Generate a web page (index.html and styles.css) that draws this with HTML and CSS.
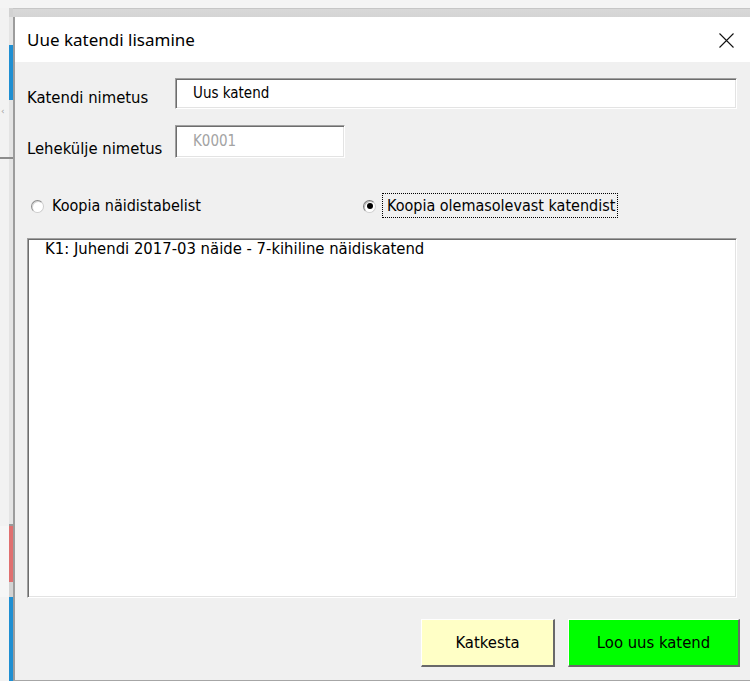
FILE: index.html
```html
<!DOCTYPE html>
<html lang="et">
<head>
<meta charset="utf-8">
<title>Uue katendi lisamine</title>
<link rel="stylesheet" href="styles.css">
</head>
<body>
<div class="screen">
  <div class="top-gap"></div>
  <div class="main">
    <div class="sheet-side">
      <div class="seg seg-band"></div>
      <div class="seg seg-light seg-a"></div>
      <div class="seg seg-blue seg-b"></div>
      <div class="seg seg-light seg-c"><span class="mark">‹</span></div>
      <div class="seg seg-line"></div>
      <div class="seg seg-light seg-d"></div>
      <div class="seg seg-line2"></div>
      <div class="seg seg-red seg-e"></div>
      <div class="seg seg-grey seg-f"></div>
      <div class="seg seg-blue seg-g"></div>
    </div>
    <div class="frame">
      <div class="ribbon-edge"></div>
      <section class="dialog">
        <header class="titlebar">
          <h1 class="title">Uue katendi lisamine</h1>
          <svg class="close" width="15" height="15" viewBox="0 0 15 15" aria-label="Sulge">
            <path d="M0.5 0.5 L14.5 14.5 M14.5 0.5 L0.5 14.5" stroke="#111" stroke-width="1.1" fill="none"/>
          </svg>
        </header>
        <div class="body">
          <div class="form-row">
            <label class="field-label label-name">Katendi nimetus</label>
            <div class="sunken input input-name">Uus katend</div>
          </div>
          <div class="form-row row-page">
            <label class="field-label label-page">Lehekülje nimetus</label>
            <div class="sunken input input-page">K0001</div>
          </div>
          <div class="radio-row">
            <div class="radio-opt opt-template">
              <span class="radio"></span>
              <span class="radio-text">Koopia näidistabelist</span>
            </div>
            <div class="radio-opt opt-existing">
              <span class="radio checked"></span>
              <span class="radio-text focused">Koopia olemasolevast katendist</span>
            </div>
          </div>
          <div class="sunken listbox">
            <div class="list-item">K1: Juhendi 2017-03 näide - 7-kihiline näidiskatend</div>
          </div>
          <div class="button-row">
            <button class="btn btn-cancel">Katkesta</button>
            <button class="btn btn-create">Loo uus katend</button>
          </div>
        </div>
      </section>
    </div>
  </div>
</div>
</body>
</html>
```

FILE: styles.css
```css
* {
  box-sizing: border-box;
}

html, body {
  margin: 0;
  padding: 0;
}

body {
  width: 750px;
  height: 681px;
  overflow: hidden;
  background: #f3f3f3;
  font-family: "DejaVu Sans Condensed", "DejaVu Sans", sans-serif;
  font-size: 16.5px;
  color: #000;
}

.screen {
  display: flex;
  flex-direction: column;
  height: 681px;
}

.top-gap {
  height: 8px;
  background: #f4f4f4;
}

.main {
  flex: 1;
  display: flex;
}

/* worksheet edge peeking out on the left */
.sheet-side {
  width: 13px;
  display: flex;
  flex-direction: column;
}

.seg {
  flex: none;
  position: relative;
}

.seg-band {
  height: 9px;
  background: linear-gradient(to right, #f2f2f2 9px, #d2d2d2 9px);
}

.seg-light {
  background: linear-gradient(to right, #f2f2f2 9px, #e4e4e4 9px);
}

.seg-blue {
  background: linear-gradient(to right, #f2f2f2 9px, #1f8fd2 9px);
}

.seg-red {
  background: linear-gradient(to right, #f6f6f6 9px, #e07070 9px);
}

.seg-grey {
  background: linear-gradient(to right, #f6f6f6 9px, #d3d3d3 9px);
}

.seg-a { height: 28px; }
.seg-b { height: 55px; }
.seg-c { height: 57px; }
.seg-d { height: 365px; }
.seg-e { height: 56px; }
.seg-f { height: 15px; }
.seg-g { flex: 1; }

.seg-line {
  height: 2px;
  background: #8c8c8c;
}

.seg-line2 {
  height: 2px;
  background: linear-gradient(to right, #f2f2f2 9px, #9a9a9a 9px);
}

.mark {
  position: absolute;
  left: 1px;
  top: 6px;
  font-family: "DejaVu Sans", sans-serif;
  font-size: 9px;
  color: #a0a0a0;
  line-height: 10px;
}

.frame {
  flex: 1;
  display: flex;
  flex-direction: column;
}

.ribbon-edge {
  height: 9px;
  background: linear-gradient(to bottom, #c6c6c6 0, #c6c6c6 1px, #d8d8d8 1px, #d4d4d4 100%);
}

/* dialog window */
.dialog {
  flex: 1;
  display: flex;
  flex-direction: column;
  border-left: 2px solid #9c9c9c;
  border-bottom: 1px solid #a6a6a6;
  background: #f0f0f0;
}

.titlebar {
  height: 45px;
  flex: none;
  background: #fff;
  display: flex;
  align-items: center;
  justify-content: space-between;
  padding: 0 16px 0 12px;
}

.title {
  margin: 0;
  font-family: "Noto Sans", "Open Sans", sans-serif;
  font-weight: 400;
  font-size: 17px;
  color: #000;
}

.close {
  display: block;
  margin-top: 1px;
}

.body {
  flex: 1;
  display: flex;
  flex-direction: column;
  padding: 16px 13px 0 12px;
}

.form-row {
  display: flex;
  align-items: flex-start;
}

.row-page {
  margin-top: 16px;
}

.field-label {
  width: 148px;
  flex: none;
  line-height: 20px;
}

.label-name {
  margin-top: 10px;
}

.label-page {
  margin-top: 14px;
}

/* Windows-style sunken edge */
.sunken {
  background: #fff;
  border-style: solid;
  border-width: 1px;
  border-color: #a0a0a0 #ffffff #ffffff #a0a0a0;
  box-shadow: inset 1px 1px 0 #6d6d6d, inset -1px -1px 0 #e3e3e3;
}

.input {
  font-size: 15px;
  line-height: 18px;
  padding-left: 17px;
}

.input-name {
  flex: 1;
  height: 31px;
  padding-top: 5px;
  color: #000;
}

.input-page {
  width: 170px;
  height: 33px;
  padding-top: 6px;
  color: #a3a3a3;
}

.radio-row {
  display: flex;
  margin-top: 34px;
  height: 25px;
  align-items: center;
}

.radio-opt {
  display: flex;
  align-items: center;
}

.opt-template {
  width: 336px;
  padding-left: 4px;
}

.radio {
  width: 13px;
  height: 13px;
  border-radius: 50%;
  background: #fff;
  border: 1px solid;
  border-color: #8c8c8c #cdcdcd #cdcdcd #8c8c8c;
  box-shadow: inset 1px 1px 0 #d6d6d6;
  position: relative;
  flex: none;
  margin-top: 1px;
}

.radio.checked {
  border-color: #7a7a7a #cfcfcf #cfcfcf #7a7a7a;
  box-shadow: inset 1px 1px 0 #bdbdbd;
}

.radio.checked::after {
  content: "";
  position: absolute;
  left: 2.5px;
  top: 2.5px;
  width: 6px;
  height: 6px;
  border-radius: 50%;
  background: #000;
}

.radio-text {
  font-size: 16px;
  line-height: 21px;
  margin-left: 8px;
}

.radio-text.focused {
  margin-left: 6px;
  border: 1px dotted #000;
  padding: 1px 2px 1px 4px;
}

.listbox {
  margin-top: 20px;
  height: 360px;
  padding: 0 0 0 17px;
}

.list-item {
  line-height: 17px;
  padding-top: 1px;
}

.button-row {
  display: flex;
  justify-content: flex-end;
  gap: 13px;
  margin-top: 21px;
  margin-right: -3px;
}

.btn {
  height: 48px;
  font-family: inherit;
  font-size: 16.5px;
  color: #000;
  border-style: solid;
  border-width: 1px 2px 2px 1px;
  border-color: #ffffff #696969 #696969 #ffffff;
  padding: 0;
  margin: 0;
}

.btn-cancel {
  width: 134px;
  background: #ffffc6;
}

.btn-create {
  width: 172px;
  background: #00ff00;
}
```
